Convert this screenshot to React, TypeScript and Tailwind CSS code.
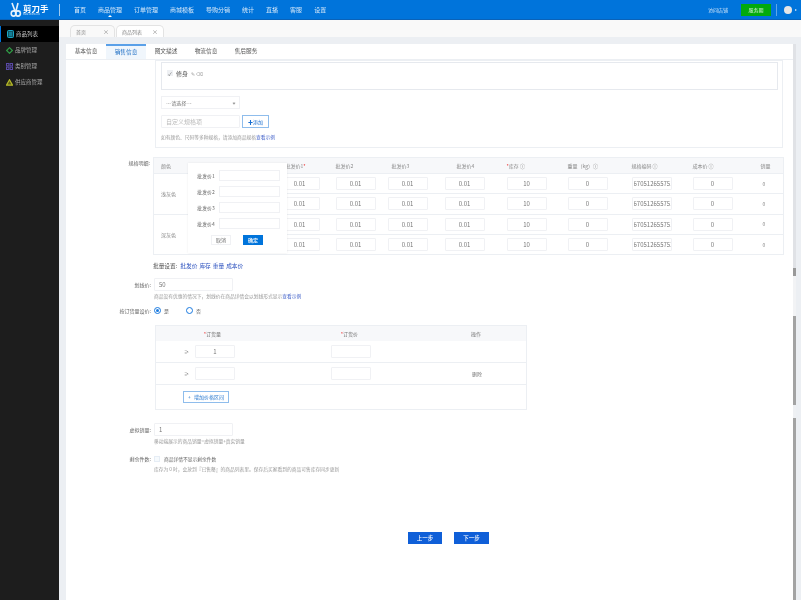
import React from "react";

const navItems = ["首页", "商品管理", "订单管理", "商城模板", "导购分销", "统计", "直播", "客服", "设置"];
const formTabs = ["基本信息", "销售信息", "图文描述", "物流信息", "售后服务"];
const codes = ["67051265575111", "67051265575151", "67051265575191", "67051265575231"];

const Box = ({ value = "", placeholder, className = "" }: { value?: string; placeholder?: string; className?: string }) => (
  <input
    readOnly
    value={value}
    placeholder={placeholder}
    className={`h-[13px] border border-[#f0f1f4] rounded-[1px] bg-white text-[6px] text-[#777] placeholder:text-[#bbb] focus:outline-none ${className}`}
  />
);

const Row = ({ label, children, className = "" }: { label: string; children: React.ReactNode; className?: string }) => (
  <div className={`flex items-start ${className}`}>
    <span className="w-[88px] shrink-0 pr-[3px] text-right text-[5px] leading-[13px] text-[#666]">{label}</span>
    {children}
  </div>
);

const Hint = ({ children, className = "" }: { children: React.ReactNode; className?: string }) => (
  <p className={`text-[4.75px] leading-[8px] text-[#999] ${className}`}>{children}</p>
);

const Sidebar = () => (
  <aside className="w-[59px] shrink-0 bg-[#1d1d1d] pt-[6px] text-[5.5px] text-[#a8a8a8]">
    <div className="flex h-[16px] items-center gap-[2px] border-l border-[#0074db] bg-black pl-[6px] text-[#c8c8c8]">
      <svg width="7" height="8" viewBox="0 0 7 8">
        <rect x="0.5" y="0.5" width="6" height="7" rx="1" fill="#0e5566" stroke="#1ba8c6" />
        <path d="M2 3h3M2 5h3" stroke="#1ba8c6" />
      </svg>
      商品列表
    </div>
    <div className="flex h-[16px] items-center gap-[2px] pl-[6px]">
      <svg width="7" height="7" viewBox="0 0 7 7">
        <path d="M3.5 0.7L6.3 3.5L3.5 6.3L0.7 3.5Z" fill="none" stroke="#2f9a45" strokeWidth="1.2" />
      </svg>
      品牌管理
    </div>
    <div className="flex h-[16px] items-center gap-[2px] pl-[6px]">
      <svg width="7" height="7" viewBox="0 0 7 7">
        <g fill="none" stroke="#5b4aa8">
          <rect x="0.5" y="0.5" width="2.4" height="2.4" />
          <rect x="4.1" y="0.5" width="2.4" height="2.4" />
          <rect x="0.5" y="4.1" width="2.4" height="2.4" />
          <rect x="4.1" y="4.1" width="2.4" height="2.4" />
        </g>
      </svg>
      类别管理
    </div>
    <div className="flex h-[16px] items-center gap-[2px] pl-[6px]">
      <svg width="7" height="7" viewBox="0 0 7 7">
        <path d="M3.5 0.8L6.5 6.2H0.5Z" fill="#5d5f14" stroke="#b4b82a" strokeWidth="1.2" />
      </svg>
      供应商管理
    </div>
  </aside>
);

const Header = () => (
  <header className="flex h-[20px] shrink-0 items-center border-b border-[#0a62b8] bg-[#0074db] text-white">
    <div className="flex w-[59px] items-center pl-[10px]">
      <svg width="12" height="15" viewBox="0 0 12 15" fill="none" stroke="#e8f2fb" strokeWidth="1.6">
        <path d="M2 1l3 8M8 1L6 9" />
        <ellipse cx="3.6" cy="11.5" rx="2.4" ry="2.6" />
        <ellipse cx="8" cy="11.5" rx="2.4" ry="2.6" />
      </svg>
      <div className="ml-[1px] flex flex-col">
        <span className="whitespace-nowrap text-[8.5px] font-bold leading-[9px]">剪刀手</span>
        <span className="whitespace-nowrap text-[2px] leading-[3px] text-[#cfe4f8]">WWW.JDSHOU.CN</span>
      </div>
    </div>
    <span className="h-[12px] w-px bg-[#9cc9f0]" />
    <nav className="ml-[14px] flex gap-[12px] text-[6px] text-[#d5e8f9]">
      {navItems.map((n) => (
        <span key={n} className="relative whitespace-nowrap">
          {n}
          {n === "商品管理" && (
            <span className="absolute left-1/2 top-[10px] h-0 w-0 -translate-x-1/2 border-x-[2px] border-b-[2px] border-x-transparent border-b-white" />
          )}
        </span>
      ))}
    </nav>
    <div className="ml-auto flex items-center">
      <span className="text-[5px] text-[#cfe4f8]">访问店铺</span>
      <span className="ml-[13px] flex h-[12px] w-[30px] items-center justify-center bg-[#02aa0d] text-[5px] text-[#d8f5da]">
        服务期
      </span>
      <span className="ml-[5px] h-[12px] w-px bg-[#5ea6e8]" />
      <span className="ml-[7px] h-[8px] w-[8px] rounded-full bg-[#e6e6e6]" />
      <span className="ml-[3px] mr-[4px] h-0 w-0 border-y-[1.5px] border-l-[2px] border-y-transparent border-l-[#d5e8f9]" />
    </div>
  </header>
);

const PageTabs = () => (
  <div className="flex h-[17px] shrink-0 items-end gap-[1px] bg-[#f9f9f9] pl-[11px] text-[5px] text-[#888]">
    <div className="flex h-[12px] w-[45px] items-center justify-between rounded-t-[5px] border border-b-0 border-[#e3e3e3] px-[5px]">
      首页 <span className="text-[6px] text-[#888]">×</span>
    </div>
    <div className="flex h-[12px] w-[48px] items-center justify-between rounded-t-[5px] border border-b-0 border-[#e3e3e3] bg-white px-[5px]">
      商品列表 <span className="text-[6px] text-[#888]">×</span>
    </div>
  </div>
);

const cols = ["w-[40px]", "w-[82px]", "w-[56px]", "w-[52px]", "w-[57px]", "w-[62px]", "w-[61px]", "w-[64px]", "w-[61px]", "w-[57px]", "w-[38px]"];

const SpecTable = () => (
  <table className="w-[630px] table-fixed border-collapse border border-[#eceff3] text-[5px] text-[#888]">
    <colgroup>
      {cols.map((c, i) => (
        <col key={i} className={c} />
      ))}
    </colgroup>
    <thead>
      <tr className="h-[16px] bg-[#f7f8fa] text-left">
        <th className="pl-[7px] font-normal">颜色</th>
        <th className="font-normal"></th>
        <th className="pl-[10px] font-normal">
          批发价1<span className="text-[#e33]">*</span>
        </th>
        <th className="pl-[4px] font-normal">批发价2</th>
        <th className="pl-[8px] font-normal">批发价3</th>
        <th className="pl-[16px] font-normal">批发价4</th>
        <th className="pl-[4px] font-normal">
          <span className="text-[#e33]">*</span>库存 ⓘ
        </th>
        <th className="pl-[4px] font-normal">重量（kg）ⓘ</th>
        <th className="pl-[4px] font-normal">规格编码 ⓘ</th>
        <th className="pl-[4px] font-normal">成本价 ⓘ</th>
        <th className="pl-[15px] font-normal">销量</th>
      </tr>
    </thead>
    <tbody>
      {codes.map((code, i) => (
        <tr key={code} className="h-[20.25px] border-t border-[#eceff3]">
          {i % 2 === 0 && (
            <td rowSpan={2} className="pl-[7px] align-middle">
              {i === 0 ? "浅灰色" : "深灰色"}
            </td>
          )}
          <td></td>
          {["0.01", "0.01", "0.01", "0.01", "10", "0"].map((v, j) => (
            <td key={j} className="pl-[4px] align-middle leading-none">
              <Box value={v} className="w-[40px] text-center align-middle" />
            </td>
          ))}
          <td className="pl-[4px] align-middle leading-none">
            <Box value={code} className="w-[40px] pl-[1px] align-middle text-[5.3px]" />
          </td>
          <td className="pl-[4px] align-middle leading-none">
            <Box value="0" className="w-[40px] text-center align-middle" />
          </td>
          <td className="pl-[17px] align-middle">0</td>
        </tr>
      ))}
    </tbody>
  </table>
);

const BatchPopover = () => (
  <div className="absolute left-[35px] top-[6px] flex h-[90px] w-[99px] flex-col bg-white pl-[9px] pr-[7px] pt-[7px] shadow-[0_0_2px_rgba(0,0,0,0.08)]">
    {["批发价1", "批发价2", "批发价3", "批发价4"].map((p) => (
      <div key={p} className="mb-[5px] flex h-[11px] items-center justify-between text-[5px] text-[#666]">
        <span>{p}</span>
        <span className="h-[11px] w-[61px] border border-[#f0f1f4]" />
      </div>
    ))}
    <div className="flex justify-center gap-[12px] pr-[3px] pt-[1px]">
      <span className="flex h-[10px] w-[20px] items-center justify-center border border-[#f0f1f4] text-[5px] text-[#666]">取消</span>
      <span className="flex h-[10px] w-[20px] items-center justify-center bg-[#0074db] text-[5px] font-medium text-white">确定</span>
    </div>
  </div>
);

const PriceTable = () => (
  <div className="w-[372px] border border-[#eceff3] text-[5px] text-[#777]">
    <div className="flex h-[15px] items-center whitespace-nowrap bg-[#f7f8fa]">
      <span className="w-[65px] shrink-0 text-right">
        <span className="text-[#e33]">*</span>订货量
      </span>
      <span className="w-[137px] shrink-0 text-right">
        <span className="text-[#e33]">*</span>订货价
      </span>
      <span className="ml-[113px]">操作</span>
    </div>
    {["1", ""].map((v, i) => (
      <div key={i} className="flex h-[22px] items-center whitespace-nowrap border-b border-[#eceff3]">
        <span className="w-[39px] shrink-0 pl-[28px]">≥</span>
        <Box value={v} className="w-[40px] shrink-0 text-center" />
        <Box className="ml-[96px] w-[40px] shrink-0" />
        <span className="ml-[101px]">{i === 1 ? "删除" : ""}</span>
      </div>
    ))}
    <div className="flex h-[24px] items-center pl-[27px]">
      <span className="flex h-[12px] w-[46px] items-center justify-center gap-[3px] border border-[#8fbdec] text-[5px] text-[#2a7ad0]">
        <span>+</span> 增加价格区间
      </span>
    </div>
  </div>
);

const FormBody = () => (
  <div className="relative flex-1 overflow-hidden text-[#666]">
    {/* spec option box */}
    <div className="ml-[89px] h-[88px] w-[628px] border border-[#eceff3] px-[5px] pt-[1px]">
      <div className="flex h-[28px] w-[617px] items-start border border-[#e6e9ee] pl-[5px] pt-[6px] text-[6px] leading-[9px]">
        <span className="mt-[1px] flex h-[6px] w-[6px] items-center justify-center bg-[#eef0f3] text-[5px] leading-none text-[#666]">✓</span>
        <span className="ml-[3px] text-[#555]">修身</span>
        <span className="ml-[3px] text-[5px] text-[#999]">✎ ⌫</span>
      </div>
      <div className="mt-[6px] flex h-[13px] w-[79px] items-center justify-between border border-[#f0f1f4] px-[4px] text-[5px] text-[#777]">
        ---请选择---
        <span className="h-[2px] w-[2px] rotate-45 border-b border-r border-[#999]" />
      </div>
      <div className="mt-[6px] flex items-center">
        <Box className="w-[79px] pl-[4px] text-[5px]" placeholder="自定义规格项" />
        <span className="ml-[2px] flex h-[13px] w-[27px] items-center justify-center border border-[#8fbdec] text-[5px] text-[#1a6fd0]">✚添加</span>
      </div>
      <Hint className="mt-[5px]">
        如有颜色、尺码等多种规格，请添加商品规格<span className="text-[#3f5fc8]">查看示例</span>
      </Hint>
    </div>

    <div className="relative mt-[9px] flex">
      <span className="w-[87px] pr-[3px] pt-[2px] text-right text-[5px] leading-[8px] text-[#666]">规格明细:</span>
      <SpecTable />
      <div className="absolute left-[87px] top-0">
        <BatchPopover />
      </div>
    </div>

    <div className="ml-[87px] mt-[7px] flex gap-[2px] text-[5.7px] leading-[8px]">
      <span className="mr-[1px] text-[#555]">批量设置:</span>
      {["批发价", "库存", "重量", "成本价"].map((t) => (
        <span key={t} className="text-[#3055c0]">
          {t}
        </span>
      ))}
    </div>

    <Row label="划线价:" className="mt-[8px]">
      <Box value="50" className="w-[79px] pl-[4px]" />
    </Row>
    <Hint className="ml-[88px] mt-[1px]">
      商品没有优惠的情况下，划线价在商品详情会以划线形式显示<span className="text-[#3f5fc8]">查看示例</span>
    </Hint>

    <Row label="按订货量设价:" className="mt-[4px]">
      <div className="flex h-[13px] items-center text-[5px]">
        <span className="flex h-[7px] w-[7px] items-center justify-center rounded-full border border-[#1a7ae0]">
          <span className="h-[3px] w-[3px] rounded-full bg-[#1a7ae0]" />
        </span>
        <span className="ml-[3px]">是</span>
        <span className="ml-[17px] h-[7px] w-[7px] rounded-full border border-[#1a7ae0]" />
        <span className="ml-[3px]">否</span>
      </div>
    </Row>

    <div className="ml-[89px] mt-[8px]">
      <PriceTable />
    </div>

    <Row label="虚拟销量:" className="mt-[13px]">
      <Box value="1" className="w-[79px] pl-[4px]" />
    </Row>
    <Hint className="ml-[88px] mt-[1px]">移动端展示的商品销量=虚拟销量+真实销量</Hint>

    <Row label="剩余件数:" className="mt-[7px]">
      <div className="flex h-[13px] items-center">
        <span className="h-[6px] w-[6px] border border-[#e6edf5] bg-[#f6fafd]" />
        <span className="ml-[4px] text-[4.75px] text-[#666]">商品详情不显示剩余件数</span>
      </div>
    </Row>
    <Hint className="ml-[88px]">库存为 0 时，会放到『已售罄』的商品列表里。保存后买家看到的商品可售库存同步更新</Hint>

    <div className="ml-[342px] mt-[59px] flex gap-[12px]">
      <span className="flex h-[12px] w-[34px] items-center justify-center bg-[#0f5fd8] text-[5.5px] font-medium text-white">上一步</span>
      <span className="flex h-[12px] w-[35px] items-center justify-center bg-[#0f5fd8] text-[5.5px] font-medium text-white">下一步</span>
    </div>
  </div>
);

const ScrollStrip = () => (
  <div className="flex w-[3px] flex-col bg-[#a3a3a3]">
    <div className="h-[224px] bg-[#e0e2e6]" />
    <div className="h-[8px] bg-[#999]" />
    <div className="h-[40px] bg-[#f2f3f5]" />
    <div className="h-[89px]" />
    <div className="h-[13px] bg-[#eef0f3]" />
  </div>
);

export default function App() {
  return (
    <div className="flex h-[600px] w-[801px] flex-col overflow-hidden bg-[#eceff3] font-['Noto_Sans_CJK_SC','Liberation_Sans',sans-serif] blur-[0.35px]">
      <Header />
      <div className="flex min-h-0 flex-1">
        <Sidebar />
        <main className="flex min-w-0 flex-1 flex-col">
          <PageTabs />
          <div className="ml-[7px] mt-[7px] flex min-h-0 flex-1">
            <div className="flex w-[727px] flex-col bg-white">
              <div className="flex h-[16px] shrink-0 border-b border-[#eceff3] text-[5.7px] text-[#555]">
                {formTabs.map((t) => (
                  <span
                    key={t}
                    className={`flex w-[40px] items-center justify-center ${
                      t === "销售信息" ? "border-t-2 border-[#5aa0e8] bg-[#f0f6fc] text-[#1f6fc4]" : ""
                    }`}
                  >
                    {t}
                  </span>
                ))}
              </div>
              <FormBody />
            </div>
            <ScrollStrip />
          </div>
        </main>
      </div>
    </div>
  );
}
